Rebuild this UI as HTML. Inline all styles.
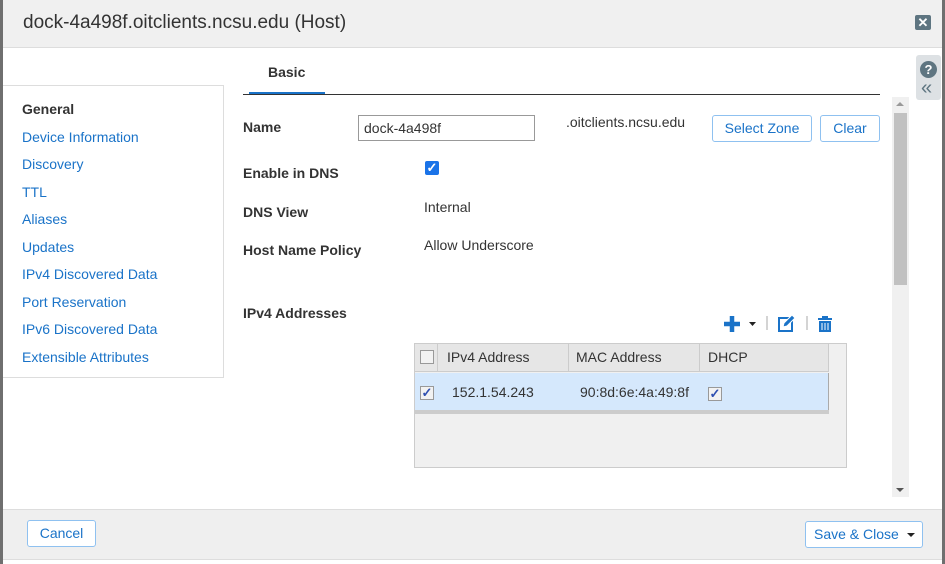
<!DOCTYPE html>
<html><head><meta charset="utf-8"><style>
*{box-sizing:border-box;margin:0;padding:0}
body{width:945px;height:564px;position:relative;overflow:hidden;background:#fff;font-family:"Liberation Sans",Arial,sans-serif;font-size:14px;color:#333}
.a{position:absolute}
.nav div{position:absolute;left:19px;color:#1a73c8;font-size:14px}
.lbl{position:absolute;left:243px;font-weight:bold;font-size:14px;color:#333}
.btn{position:absolute;border:1px solid #8fc1f0;border-radius:3px;background:#fff;color:#1a73c8;font-size:14px;text-align:center}
.cb{position:absolute;width:14px;height:14px;border:1px solid #999;background:#f2f2f2}
.ck{color:#2f4fb0;font-size:13px;line-height:12px;text-align:center;font-weight:bold}
</style></head><body>
<div class="a" style="left:0;top:0;width:3px;height:564px;background:#6f6f6f"></div>
<div class="a" style="left:942px;top:0;width:3px;height:564px;background:#6f6f6f"></div>
<div class="a" style="left:3px;top:0;width:939px;height:48px;background:#f0f0f0;border-bottom:1px solid #ddd"></div>
<div class="a" style="left:23px;top:12px;font-size:19px;color:#333">dock-4a498f.oitclients.ncsu.edu (Host)</div>
<div class="a" style="left:915px;top:15px;width:16px;height:15px;background:#5e7581;border-radius:2px;color:#fff;font-size:13px;font-weight:bold;text-align:center;line-height:15px">✕</div>
<div class="a" style="left:916px;top:55px;width:25px;height:45px;background:#dde1e4;border-radius:3px"></div>
<div class="a" style="left:920px;top:61px;width:17px;height:17px;border-radius:50%;background:#5e7581;color:#fff;font-weight:bold;font-size:13px;text-align:center;line-height:17px">?</div>
<div class="a" style="left:921px;top:78px;color:#5e7581;font-size:20px;line-height:20px">«</div>
<div class="a" style="left:268px;top:64px;font-weight:bold;font-size:14px">Basic</div>
<div class="a" style="left:249px;top:92px;width:76px;height:3px;background:#1a73c8"></div>
<div class="a" style="left:243px;top:94px;width:637px;height:1px;background:#333"></div>
<div class="a nav" style="left:3px;top:85px;width:221px;height:293px;border:1px solid #ddd;border-left:none;background:#fff">
<div style="top:15px;color:#333;font-weight:bold">General</div>
<div style="top:43px">Device Information</div>
<div style="top:70px">Discovery</div>
<div style="top:98px">TTL</div>
<div style="top:125px">Aliases</div>
<div style="top:153px">Updates</div>
<div style="top:180px">IPv4 Discovered Data</div>
<div style="top:208px">Port Reservation</div>
<div style="top:235px">IPv6 Discovered Data</div>
<div style="top:263px">Extensible Attributes</div>
</div>
<div class="lbl" style="top:119px">Name</div>
<div class="a" style="left:358px;top:115px;width:177px;height:26px;border:1px solid #999;padding:4px 5px;font-size:14px">dock-4a498f</div>
<div class="a" style="left:566px;top:114px;font-size:14px">.oitclients.ncsu.edu</div>
<div class="btn" style="left:712px;top:115px;width:100px;height:27px;line-height:25px">Select Zone</div>
<div class="btn" style="left:820px;top:115px;width:60px;height:27px;line-height:25px">Clear</div>
<div class="lbl" style="top:165px">Enable in DNS</div>
<div class="a" style="left:425px;top:161px;width:14px;height:14px;background:#1a73e8;border-radius:2px;color:#fff;font-size:13px;font-weight:bold;text-align:center;line-height:14px">✓</div>
<div class="lbl" style="top:204px">DNS View</div>
<div class="a" style="left:424px;top:199px">Internal</div>
<div class="lbl" style="top:242px">Host Name Policy</div>
<div class="a" style="left:424px;top:237px">Allow Underscore</div>
<div class="lbl" style="top:305px">IPv4 Addresses</div>
<svg class="a" style="left:720px;top:312px" width="120" height="24">
<path d="M12 4v16M4 12h16" stroke="#1a73c8" stroke-width="4.5"/>
<path d="M29 10h7l-3.5 4z" fill="#222"/>
<path d="M47 4v14" stroke="#aaa"/>
<rect x="59" y="6" width="13" height="13" fill="none" stroke="#1a73c8" stroke-width="2"/>
<path d="M63 15l1-4 8-8 3 3-8 8z" fill="#1a73c8" stroke="#fff" stroke-width="1"/>
<path d="M87 4v14" stroke="#aaa"/>
<rect x="98" y="6" width="14" height="2" fill="#1a73c8"/><rect x="102" y="4" width="6" height="2" fill="#1a73c8"/>
<path d="M99 9h12v11h-12z" fill="#1a73c8"/><path d="M102 11v7M105 11v7M108 11v7" stroke="#fff"/>
</svg>
<div class="a" style="left:414px;top:343px;width:433px;height:125px;background:#f0f0f0;border:1px solid #ccc"></div>
<div class="a" style="left:415px;top:344px;width:413px;height:28px;background:#e6e6e6;border-bottom:1px solid #ccc"></div>
<div class="a" style="left:437px;top:344px;width:1px;height:28px;background:#ccc"></div>
<div class="a" style="left:568px;top:344px;width:1px;height:28px;background:#ccc"></div>
<div class="a" style="left:699px;top:344px;width:1px;height:28px;background:#ccc"></div>
<div class="a" style="left:828px;top:344px;width:1px;height:28px;background:#ccc"></div>
<div class="cb" style="left:420px;top:350px"></div>
<div class="a" style="left:447px;top:349px">IPv4 Address</div>
<div class="a" style="left:576px;top:349px">MAC Address</div>
<div class="a" style="left:708px;top:349px">DHCP</div>
<div class="a" style="left:415px;top:373px;width:414px;height:37px;background:#d5e8fc;border-right:1px solid #aaa"></div>
<div class="a" style="left:415px;top:410px;width:414px;height:4px;background:#ccc"></div>
<div class="cb ck" style="left:420px;top:386px">✓</div>
<div class="a" style="left:452px;top:384px">152.1.54.243</div>
<div class="a" style="left:580px;top:384px">90:8d:6e:4a:49:8f</div>
<div class="cb ck" style="left:708px;top:387px">✓</div>
<div class="a" style="left:892px;top:97px;width:17px;height:400px;background:#f0f0f0"></div>
<div class="a" style="left:894px;top:113px;width:13px;height:172px;background:#c1c1c1"></div>
<div class="a" style="left:896px;top:102px;width:0;height:0;border:4px solid transparent;border-bottom-color:#999;border-top:none"></div>
<div class="a" style="left:896px;top:488px;width:0;height:0;border:4px solid transparent;border-top-color:#555;border-bottom:none"></div>
<div class="a" style="left:3px;top:509px;width:939px;height:51px;background:#efefef;border-top:1px solid #ddd;border-bottom:1px solid #ddd"></div>
<div class="btn" style="left:27px;top:520px;width:69px;height:27px;line-height:25px">Cancel</div>
<div class="btn" style="left:805px;top:521px;width:118px;height:27px;line-height:25px;text-align:left;padding-left:8px">Save &amp; Close</div>
<div class="a" style="left:907px;top:533px;width:0;height:0;border:4px solid transparent;border-top-color:#222;border-bottom:none"></div>
</body></html>
